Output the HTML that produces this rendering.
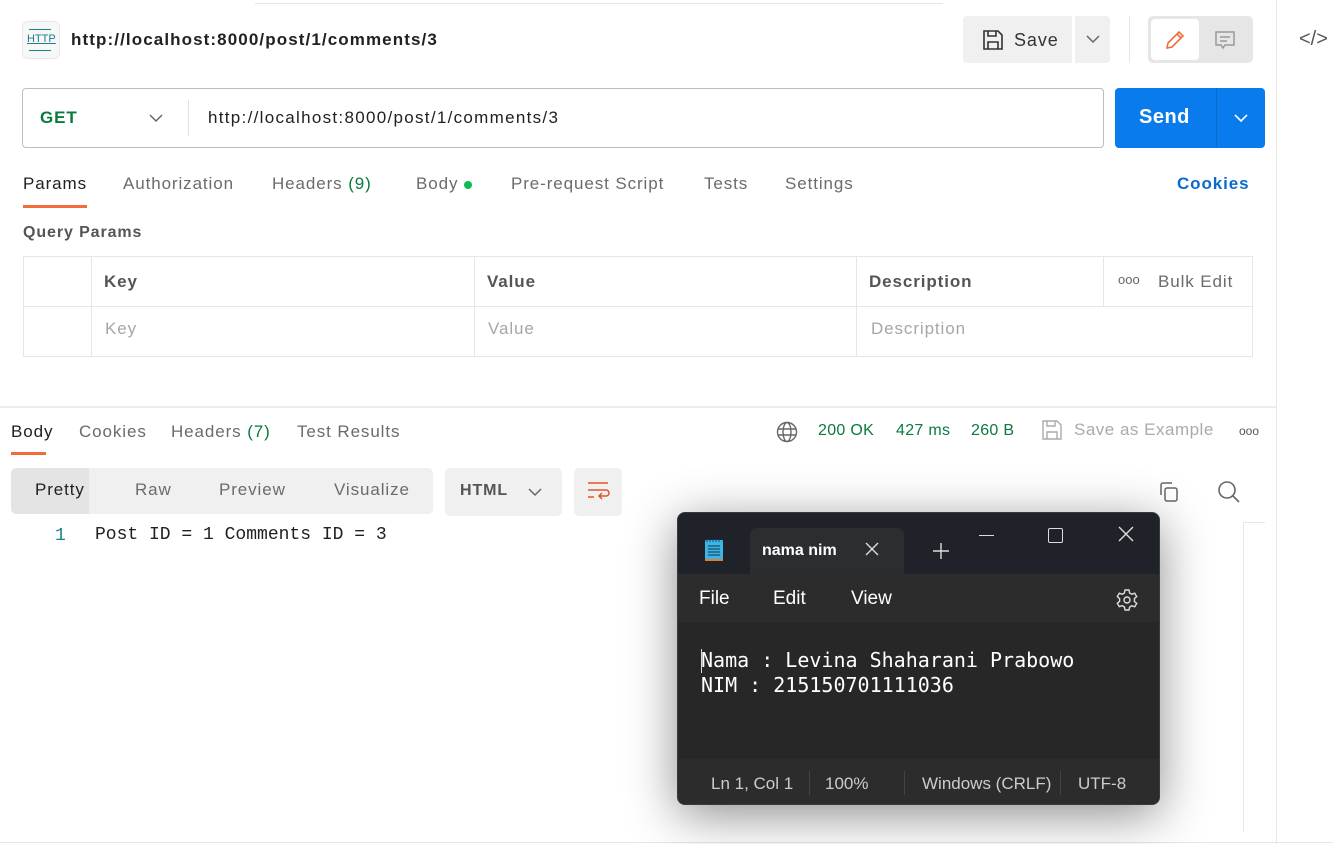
<!DOCTYPE html>
<html><head><meta charset="utf-8"><style>
*{margin:0;padding:0;box-sizing:border-box}
body{width:1333px;height:844px;background:#fff;font-family:"Liberation Sans",sans-serif;position:relative;overflow:hidden;color:#212121;letter-spacing:0.9px}
.a{position:absolute;white-space:nowrap}
.g{color:#6b6b6b}
.np,.np *{letter-spacing:0}
</style></head><body>
<div class="a" style="left:255px;top:3px;width:688px;height:1px;background:#e6e6e6"></div>
<div class="a" style="left:1276px;top:0;width:1px;height:844px;background:#e6e6e6"></div>
<div class="a" style="left:0;top:842px;width:1333px;height:1px;background:#e6e6e6"></div>
<!-- header -->
<div class="a" style="left:22px;top:21px;width:38px;height:38px;border:1px solid #e8e8e8;border-radius:6px;background:#f7f7f7"></div>
<div class="a" style="left:27px;top:33px;font-size:11px;color:#1a7f8e;text-decoration:underline;letter-spacing:0">HTTP</div>
<div class="a" style="left:29px;top:29px;width:22px;height:1px;background:#1a7f8e"></div>
<div class="a" style="left:29px;top:50px;width:22px;height:1px;background:#1a7f8e"></div>
<div class="a" style="left:71px;top:30px;font-size:17px;font-weight:bold;letter-spacing:1.1px">http://localhost:8000/post/1/comments/3</div>
<div class="a" style="left:963px;top:16px;width:109px;height:47px;background:#f0f0f0;border-radius:4px 0 0 4px"></div>
<div class="a" style="left:1075px;top:16px;width:35px;height:47px;background:#f0f0f0;border-radius:0 4px 4px 0"></div>
<svg class="a" style="left:981px;top:28px" width="24" height="24" viewBox="0 0 24 24" fill="none" stroke="#333" stroke-width="1.6"><path d="M3 3h14l4 4v14H3z"/><path d="M7 3v5h8V3M7 21v-7h10v7"/></svg>
<div class="a" style="left:1014px;top:30px;font-size:18px;color:#333">Save</div>
<svg class="a" style="left:1085px;top:34px" width="16" height="10"><path d="M2 2l6 6 6-6" fill="none" stroke="#666" stroke-width="1.5"/></svg>
<div class="a" style="left:1129px;top:16px;width:1px;height:47px;background:#e6e6e6"></div>
<div class="a" style="left:1148px;top:16px;width:105px;height:47px;background:#e6e6e6;border-radius:5px"></div>
<div class="a" style="left:1151px;top:19px;width:48px;height:41px;background:#fff;border-radius:4px"></div>
<svg class="a" style="left:1163px;top:28px" width="24" height="24" viewBox="0 0 24 24" fill="none" stroke="#f26b3a" stroke-width="1.6"><path d="M4 20l1-5L16 4l4 4L9 19z M14 6l4 4"/></svg>
<svg class="a" style="left:1213px;top:28px" width="24" height="24" viewBox="0 0 24 24" fill="none" stroke="#999" stroke-width="1.5"><path d="M3 4h18v13h-9l-2 3-2-3H3z M7 9h10M7 13h7"/></svg>
<div class="a" style="left:1299px;top:28px;font-size:20px;color:#555;letter-spacing:0">&lt;/&gt;</div>
<!-- url bar -->
<div class="a" style="left:22px;top:88px;width:1082px;height:60px;border:1px solid #bdbdbd;border-radius:4px"></div>
<div class="a" style="left:40px;top:108px;font-size:17px;font-weight:bold;color:#0b7a3e">GET</div>
<svg class="a" style="left:148px;top:113px" width="16" height="10"><path d="M2 2l6 6 6-6" fill="none" stroke="#666" stroke-width="1.5"/></svg>
<div class="a" style="left:188px;top:100px;width:1px;height:36px;background:#e0e0e0"></div>
<div class="a" style="left:208px;top:108px;font-size:17px;letter-spacing:1.3px">http://localhost:8000/post/1/comments/3</div>
<div class="a" style="left:1115px;top:88px;width:150px;height:60px;background:#097bed;border-radius:4px"></div>
<div class="a" style="left:1216px;top:88px;width:1px;height:60px;background:#0a6bcc"></div>
<div class="a" style="left:1139px;top:106px;font-size:20px;font-weight:bold;color:#fff;letter-spacing:0.5px">Send</div>
<svg class="a" style="left:1233px;top:113px" width="16" height="10"><path d="M2 2l6 6 6-6" fill="none" stroke="#fff" stroke-width="1.6"/></svg>
<!-- tabs -->
<div class="a" style="left:23px;top:174px;font-size:17px">Params</div>
<div class="a" style="left:23px;top:205px;width:64px;height:3px;background:#f26b3a"></div>
<div class="a g" style="left:123px;top:174px;font-size:17px">Authorization</div>
<div class="a g" style="left:272px;top:174px;font-size:17px">Headers <span style="color:#0b7a3e">(9)</span></div>
<div class="a g" style="left:416px;top:174px;font-size:17px">Body <span style="display:inline-block;width:8px;height:8px;border-radius:50%;background:#0cbb52;vertical-align:middle"></span></div>
<div class="a g" style="left:511px;top:174px;font-size:17px">Pre-request Script</div>
<div class="a g" style="left:704px;top:174px;font-size:17px">Tests</div>
<div class="a g" style="left:785px;top:174px;font-size:17px">Settings</div>
<div class="a" style="left:1177px;top:174px;font-size:17px;font-weight:bold;color:#0a6bcc">Cookies</div>
<div class="a" style="left:23px;top:224px;font-size:16px;font-weight:bold;color:#555">Query Params</div>
<!-- table -->
<div class="a" style="left:23px;top:256px;width:1230px;height:101px;border:1px solid #e6e6e6"></div>
<div class="a" style="left:23px;top:306px;width:1230px;height:1px;background:#e6e6e6"></div>
<div class="a" style="left:91px;top:256px;width:1px;height:101px;background:#e6e6e6"></div>
<div class="a" style="left:474px;top:256px;width:1px;height:101px;background:#e6e6e6"></div>
<div class="a" style="left:856px;top:256px;width:1px;height:101px;background:#e6e6e6"></div>
<div class="a" style="left:1103px;top:256px;width:1px;height:50px;background:#e6e6e6"></div>
<div class="a" style="left:104px;top:272px;font-size:17px;font-weight:bold;color:#555">Key</div>
<div class="a" style="left:487px;top:272px;font-size:17px;font-weight:bold;color:#555">Value</div>
<div class="a" style="left:869px;top:272px;font-size:17px;font-weight:bold;color:#555">Description</div>
<div class="a" style="left:1118px;top:272px;font-size:13px;color:#666;letter-spacing:0">ooo</div>
<div class="a g" style="left:1158px;top:272px;font-size:17px">Bulk Edit</div>
<div class="a" style="left:105px;top:319px;font-size:17px;color:#a6a6a6">Key</div>
<div class="a" style="left:488px;top:319px;font-size:17px;color:#a6a6a6">Value</div>
<div class="a" style="left:871px;top:319px;font-size:17px;color:#a6a6a6">Description</div>
<!-- response -->
<div class="a" style="left:0;top:406px;width:1276px;height:2px;background:#ececec"></div>
<div class="a" style="left:11px;top:422px;font-size:17px">Body</div>
<div class="a" style="left:11px;top:452px;width:35px;height:3px;background:#f26b3a"></div>
<div class="a g" style="left:79px;top:422px;font-size:17px">Cookies</div>
<div class="a g" style="left:171px;top:422px;font-size:17px">Headers <span style="color:#0b7a3e">(7)</span></div>
<div class="a g" style="left:297px;top:422px;font-size:17px">Test Results</div>
<svg class="a" style="left:776px;top:421px" width="22" height="22" viewBox="0 0 22 22" fill="none" stroke="#666" stroke-width="1.4"><circle cx="11" cy="11" r="9.5"/><ellipse cx="11" cy="11" rx="4" ry="9.5"/><path d="M2 8h18M2 14h18"/></svg>
<div class="a" style="left:818px;top:422px;font-size:16px;color:#0b7a3e;letter-spacing:0.3px">200 OK</div>
<div class="a" style="left:896px;top:422px;font-size:16px;color:#0b7a3e;letter-spacing:0.3px">427 ms</div>
<div class="a" style="left:971px;top:422px;font-size:16px;color:#0b7a3e;letter-spacing:0.3px">260 B</div>
<svg class="a" style="left:1041px;top:419px" width="22" height="22" viewBox="0 0 22 22" fill="none" stroke="#aaa" stroke-width="1.4"><path d="M2 2h14l4 4v14H2z M6 2v5h8V2M6 20v-7h10v7"/></svg>
<div class="a" style="left:1074px;top:420px;font-size:17px;color:#aaa;letter-spacing:0.5px">Save as Example</div>
<div class="a" style="left:1239px;top:424px;font-size:12px;color:#555;letter-spacing:0">ooo</div>
<div class="a" style="left:11px;top:468px;width:422px;height:46px;background:#f0f0f0;border-radius:5px"></div>
<div class="a" style="left:11px;top:468px;width:78px;height:46px;background:#e4e4e4;border-radius:5px 0 0 5px"></div>
<div class="a" style="left:35px;top:480px;font-size:17px">Pretty</div>
<div class="a g" style="left:135px;top:480px;font-size:17px">Raw</div>
<div class="a g" style="left:219px;top:480px;font-size:17px">Preview</div>
<div class="a g" style="left:334px;top:480px;font-size:17px">Visualize</div>
<div class="a" style="left:445px;top:468px;width:117px;height:48px;background:#f0f0f0;border-radius:5px"></div>
<div class="a" style="left:460px;top:482px;font-size:16px;font-weight:bold;color:#555">HTML</div>
<svg class="a" style="left:527px;top:487px" width="16" height="10"><path d="M2 2l6 6 6-6" fill="none" stroke="#666" stroke-width="1.5"/></svg>
<div class="a" style="left:574px;top:468px;width:48px;height:48px;background:#f0f0f0;border-radius:5px"></div>
<svg class="a" style="left:586px;top:480px" width="24" height="24" viewBox="0 0 24 24" fill="none" stroke="#e0542a" stroke-width="1.5"><path d="M2 3h20M2 10h18a3 3 0 0 1 0 6h-6M16 13l-3 3 3 3M2 17h6"/></svg>
<svg class="a" style="left:1157px;top:480px" width="24" height="24" viewBox="0 0 24 24" fill="none" stroke="#666" stroke-width="1.5"><rect x="8" y="8" width="12" height="13" rx="2"/><path d="M4 15V5a2 2 0 0 1 2-2h9"/></svg>
<svg class="a" style="left:1216px;top:479px" width="26" height="26" viewBox="0 0 26 26" fill="none" stroke="#666" stroke-width="1.6"><circle cx="11" cy="11" r="8"/><path d="M17 17l6 6"/></svg>
<div class="a" style="left:1243px;top:522px;width:1px;height:310px;background:#e6e6e6"></div>
<div class="a" style="left:1243px;top:522px;width:22px;height:1px;background:#e6e6e6"></div>
<div class="a" style="left:55px;top:526px;font-family:'Liberation Mono',monospace;font-size:18px;color:#1a7f8e;letter-spacing:0">1</div>
<div class="a" style="left:95px;top:525px;font-family:'Liberation Mono',monospace;font-size:18px;letter-spacing:0">Post ID = 1 Comments ID = 3</div>
<!-- notepad -->
<div class="a np" style="left:677px;top:512px;width:483px;height:293px;border-radius:8px;background:#272727;overflow:hidden;box-shadow:0 10px 50px rgba(0,0,0,.45);border:1px solid #3a3a3a">
 <div class="a" style="left:0;top:0;width:483px;height:61px;background:#1f2229"></div>
 <div class="a" style="left:72px;top:15px;width:154px;height:46px;background:#2b2d31;border-radius:7px 7px 0 0"></div>
 <svg class="a" style="left:26px;top:25px" width="20" height="24" viewBox="0 0 20 24"><rect x="1" y="2" width="18" height="20" rx="1" fill="#3cb4e5"/><rect x="1" y="21" width="18" height="2" fill="#e07b39"/><path d="M4 8h12M4 11h12M4 14h12M4 17h12" stroke="#1a4c6e" stroke-width="1.2"/><path d="M3 1v3M6 1v3M9 1v3M12 1v3M15 1v3" stroke="#1a4c6e"/></svg>
 <div class="a" style="left:84px;top:29px;font-size:16px;font-weight:bold;color:#fff">nama nim</div>
 <svg class="a" style="left:187px;top:29px" width="14" height="14"><path d="M1 1l12 12M13 1L1 13" stroke="#ddd" stroke-width="1.4"/></svg>
 <svg class="a" style="left:255px;top:30px" width="16" height="16"><path d="M8 0v16M0 8h16" stroke="#ddd" stroke-width="1.4"/></svg>
 <div class="a" style="left:301px;top:22px;width:15px;height:1px;background:#ddd"></div>
 <div class="a" style="left:370px;top:15px;width:15px;height:15px;border:1.5px solid #ddd;border-radius:2px"></div>
 <svg class="a" style="left:440px;top:13px" width="16" height="16"><path d="M1 1l14 14M15 1L1 15" stroke="#ddd" stroke-width="1.4"/></svg>
 <div class="a" style="left:0;top:61px;width:483px;height:48px;background:#2c2c2c"></div>
 <div class="a" style="left:21px;top:75px;font-size:19px;color:#fff">File</div>
 <div class="a" style="left:95px;top:75px;font-size:19px;color:#fff">Edit</div>
 <div class="a" style="left:173px;top:75px;font-size:19px;color:#fff">View</div>
 <svg class="a" style="left:437px;top:75px" width="24" height="24" viewBox="0 0 24 24" fill="none" stroke="#ddd" stroke-width="1.4"><circle cx="12" cy="12" r="3"/><path d="M10 2h4l.6 3 2.2 1.2 2.9-1 2 3.4-2.3 2v2.8l2.3 2-2 3.4-2.9-1-2.2 1.3L14 22h-4l-.6-3-2.2-1.3-2.9 1-2-3.4 2.3-2V10.6L2.3 8.6l2-3.4 2.9 1L9.4 5z"/></svg>
 <div class="a" style="left:23px;top:136px;width:1px;height:24px;background:#ddd"></div>
 <div class="a" style="left:23px;top:135px;font-family:'DejaVu Sans Mono',monospace;font-size:20px;line-height:25px;color:#fff;white-space:pre">Nama : Levina Shaharani Prabowo
NIM : 215150701111036</div>
 <div class="a" style="left:0;top:246px;width:483px;height:47px;background:#2c2c2c"></div>
 <div class="a" style="left:33px;top:261px;font-size:17px;color:#ccc">Ln 1, Col 1</div>
 <div class="a" style="left:131px;top:258px;width:1px;height:24px;background:#444"></div>
 <div class="a" style="left:147px;top:261px;font-size:17px;color:#ccc">100%</div>
 <div class="a" style="left:226px;top:258px;width:1px;height:24px;background:#444"></div>
 <div class="a" style="left:244px;top:261px;font-size:17px;color:#ccc">Windows (CRLF)</div>
 <div class="a" style="left:382px;top:258px;width:1px;height:24px;background:#444"></div>
 <div class="a" style="left:400px;top:261px;font-size:17px;color:#ccc">UTF-8</div>
</div>
</body></html>
